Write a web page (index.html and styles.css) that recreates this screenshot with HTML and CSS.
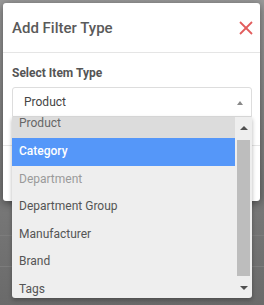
FILE: index.html
```html
<!DOCTYPE html>
<html lang="en">
<head>
    <meta charset="UTF-8">
    <title>Add Filter Type</title>
    <meta name="viewport" content="width=device-width, initial-scale=1.0">
    <link rel="stylesheet" href="styles.css">
</head>
<body>
    <div class="backdrop-lines"></div>

    <div class="modal">
        <!-- Header -->
        <div class="modal-header">
            <h3 class="modal-title">Add Filter Type</h3>
            <svg class="close-icon" xmlns="http://www.w3.org/2000/svg" viewBox="0 0 14 14">
                <line x1="1" y1="1" x2="13" y2="13" stroke="#e25c5c" stroke-width="1.8"/>
                <line x1="13" y1="1" x2="1" y2="13" stroke="#e25c5c" stroke-width="1.8"/>
            </svg>
        </div>

        <!-- Body -->
        <div class="modal-body">
            <label class="field-label">Select Item Type</label>
            <div class="select">
                <span class="select-value">Product</span>
                <span class="select-arrow"></span>

                <!-- Open dropdown list -->
                <div class="dropdown">
                    <div class="options">
                        <div class="option option-hover">Product</div>
                        <div class="option option-selected">Category</div>
                        <div class="option option-disabled">Department</div>
                        <div class="option">Department Group</div>
                        <div class="option">Manufacturer</div>
                        <div class="option">Brand</div>
                        <div class="option">Tags</div>
                    </div>
                    <div class="scrollbar">
                        <div class="sb-btn"><span class="arrow-up"></span></div>
                        <div class="sb-track"><div class="sb-thumb"></div></div>
                        <div class="sb-btn"><span class="arrow-down"></span></div>
                    </div>
                </div>
            </div>
        </div>

        <!-- Footer -->
        <div class="modal-footer"></div>
    </div>
</body>
</html>
```

FILE: styles.css
```css
/* General Styles */
body {
    margin: 0;
    padding: 3px 4px 0 3px;
    height: 305px;
    box-sizing: border-box;
    overflow: hidden;
    font-family: Roboto, 'Liberation Sans', sans-serif;
    background: linear-gradient(#9a9a9a, #7a7a7a 60%, #6a6a6a);
    position: relative;
}

/* faint lines of the page behind the backdrop */
.backdrop-lines {
    position: absolute;
    left: 0;
    right: 0;
    top: 235px;
    height: 30px;
    border-top: 1px solid #7c7c7c;
    border-bottom: 1px solid #7c7c7c;
}

/* Modal */
.modal {
    position: relative;
    background-color: #ffffff;
    border-radius: 3px;
    height: 198px;
    box-shadow: 0 2px 8px rgba(0, 0, 0, 0.45);
}

.modal-header {
    height: 49px;
    padding: 0 7px 0 9px;
    display: flex;
    align-items: center;
    justify-content: space-between;
    border-bottom: 1px solid #e5e5e5;
}

.modal-title {
    margin: 0;
    font-size: 15px;
    font-weight: 500;
    color: #5a5a5a;
}

.close-icon {
    width: 14px;
    height: 14px;
    margin-top: 1px;
}

.modal-body {
    height: 92px;
    box-sizing: border-box;
    padding: 13px 8px 0 9px;
}

.field-label {
    display: block;
    font-size: 12px;
    line-height: 15px;
    font-weight: 700;
    color: #555555;
    margin-bottom: 6px;
}

/* Select box */
.select {
    position: relative;
    height: 30px;
    box-sizing: border-box;
    border: 1px solid #dddddd;
    border-radius: 3px 3px 0 0;
    display: flex;
    align-items: center;
    padding: 0 8px 0 11px;
    justify-content: space-between;
}

.select-value {
    font-size: 12px;
    color: #444444;
}

.select-arrow {
    width: 0;
    height: 0;
    border-left: 3px solid transparent;
    border-right: 3px solid transparent;
    border-bottom: 4px solid #888888;
    margin-top: 1px;
}

/* Dropdown list (overlays the modal) */
.dropdown {
    position: absolute;
    left: -1px;
    right: -1px;
    top: 29px;
    height: 181px;
    display: flex;
    background-color: #eeeeee;
    border-radius: 0 0 3px 3px;
    box-shadow: 0 2px 4px rgba(0, 0, 0, 0.3);
    overflow: hidden;
    z-index: 2;
}

.options {
    flex: 1;
    overflow: hidden;
}

.option {
    height: 27.6px;
    line-height: 27.6px;
    padding: 0 7px;
    font-size: 12px;
    color: #555555;
}

.option-hover {
    margin-top: -6.6px;
    background-color: #dcdcdc;
    color: #666666;
}

.option-selected {
    background-color: #5597f9;
    color: #ffffff;
    font-weight: 500;
}

.option-disabled {
    color: #9a9a9a;
}

/* Scrollbar */
.scrollbar {
    width: 17px;
    display: flex;
    flex-direction: column;
}

.sb-btn {
    height: 21px;
    display: flex;
    align-items: center;
    justify-content: center;
}

.sb-track {
    flex: 1;
    padding: 2px 2px 1px 2px;
}

.sb-thumb {
    height: 100%;
    background-color: #bdbdbd;
}

.arrow-up {
    width: 0;
    height: 0;
    border-left: 4px solid transparent;
    border-right: 4px solid transparent;
    border-bottom: 4px solid #505050;
}

.arrow-down {
    width: 0;
    height: 0;
    border-left: 4px solid transparent;
    border-right: 4px solid transparent;
    border-top: 4px solid #505050;
}

.modal-footer {
    height: 56px;
    border-top: 1px solid #e5e5e5;
}
```
